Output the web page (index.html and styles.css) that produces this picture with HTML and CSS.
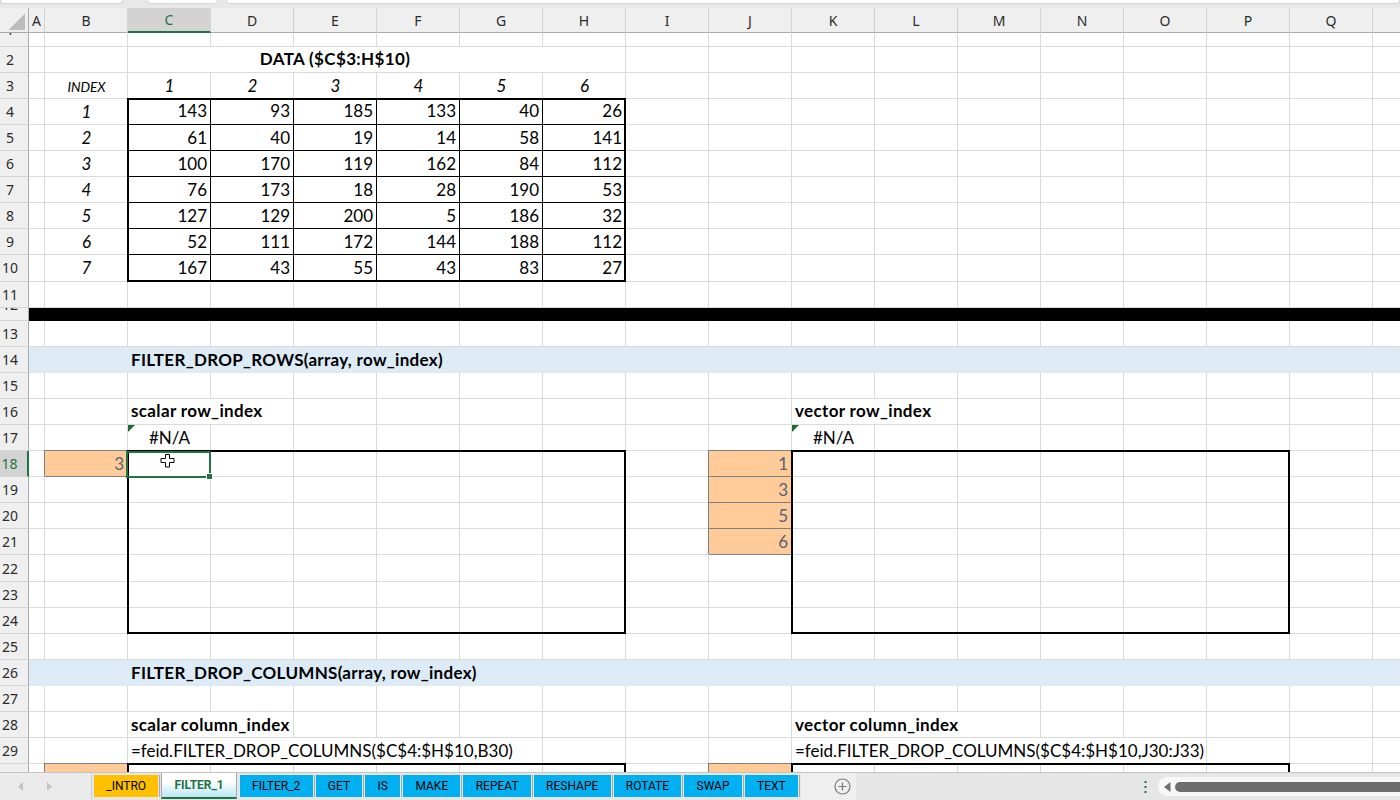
FILE: index.html
```html
<!DOCTYPE html>
<html>
<head>
<meta charset="utf-8">
<link rel="stylesheet" href="styles.css">
</head>
<body>
<div class="app">
  <div class="topstrip"><div class="fbox nb"></div><div class="fbox fx"></div><div class="fbox fb"></div></div>
  <div class="sheet">
    <div class="colhead">
      <div class="corner"><i></i></div>
      <div class="ch">A</div><div class="ch">B</div><div class="ch sel">C</div><div class="ch">D</div><div class="ch">E</div><div class="ch">F</div><div class="ch">G</div><div class="ch">H</div><div class="ch">I</div><div class="ch">J</div><div class="ch">K</div><div class="ch">L</div><div class="ch">M</div><div class="ch">N</div><div class="ch">O</div><div class="ch">P</div><div class="ch">Q</div><div class="ch">R</div>
    </div>

    <div class="row short1"><div class="rh clip"><span>1</span></div></div>
    <div class="row"><div class="rh">2</div><div class="c ctr b gC s6 spill title">DATA ($C$3:H$10)</div></div>
    <div class="row"><div class="rh">3</div><div class="c ctr it sm gB">INDEX</div><div class="c ctr it">1</div><div class="c ctr it">2</div><div class="c ctr it">3</div><div class="c ctr it">4</div><div class="c ctr it">5</div><div class="c ctr it">6</div></div>
    <div class="row"><div class="rh">4</div><div class="c ctr it gB">1</div><div class="c bx d et el">143</div><div class="c bx d et">93</div><div class="c bx d et">185</div><div class="c bx d et">133</div><div class="c bx d et">40</div><div class="c bx d et er">26</div></div>
    <div class="row"><div class="rh">5</div><div class="c ctr it gB">2</div><div class="c bx d el">61</div><div class="c bx d">40</div><div class="c bx d">19</div><div class="c bx d">14</div><div class="c bx d">58</div><div class="c bx d er">141</div></div>
    <div class="row"><div class="rh">6</div><div class="c ctr it gB">3</div><div class="c bx d el">100</div><div class="c bx d">170</div><div class="c bx d">119</div><div class="c bx d">162</div><div class="c bx d">84</div><div class="c bx d er">112</div></div>
    <div class="row"><div class="rh">7</div><div class="c ctr it gB">4</div><div class="c bx d el">76</div><div class="c bx d">173</div><div class="c bx d">18</div><div class="c bx d">28</div><div class="c bx d">190</div><div class="c bx d er">53</div></div>
    <div class="row"><div class="rh">8</div><div class="c ctr it gB">5</div><div class="c bx d el">127</div><div class="c bx d">129</div><div class="c bx d">200</div><div class="c bx d">5</div><div class="c bx d">186</div><div class="c bx d er">32</div></div>
    <div class="row"><div class="rh">9</div><div class="c ctr it gB">6</div><div class="c bx d el">52</div><div class="c bx d">111</div><div class="c bx d">172</div><div class="c bx d">144</div><div class="c bx d">188</div><div class="c bx d er">112</div></div>
    <div class="row"><div class="rh">10</div><div class="c ctr it gB">7</div><div class="c bx d el eb">167</div><div class="c bx d eb">43</div><div class="c bx d eb">55</div><div class="c bx d eb">43</div><div class="c bx d eb">83</div><div class="c bx d er eb">27</div></div>
    <div class="row"><div class="rh">11</div></div>
    <div class="row short12"><div class="rh clip"><span>12</span></div><div class="blk"></div></div>
    <div class="row"><div class="rh">13</div></div>
    <div class="row"><div class="rh">14</div><div class="band">FILTER_DROP_ROWS(array, row_index)</div></div>
    <div class="row"><div class="rh">15</div></div>
    <div class="row"><div class="rh">16</div><div class="c b gC s2 spill">scalar row_index</div><div class="c b gK s2 spill">vector row_index</div></div>
    <div class="row"><div class="rh">17</div><div class="c ctr err gC">#N/A</div><div class="c ctr err gK">#N/A</div></div>
    <div class="row"><div class="rh sel">18</div><div class="c inp gB">3</div><div class="c bx et el cur gC"><svg class="cursor" width="15" height="14" viewBox="0 0 15 14"><polygon points="5.5,0.5 9.5,0.5 9.5,4.5 14,4.5 14,8.5 9.5,8.5 9.5,13 5.5,13 5.5,8.5 1,8.5 1,4.5 5.5,4.5" fill="#fff" stroke="#000" stroke-width="1"/></svg><div class="selbox"></div></div><div class="c bx et"></div><div class="c bx et"></div><div class="c bx et"></div><div class="c bx et"></div><div class="c bx et er"></div><div class="c inp gJ">1</div><div class="c bx et el"></div><div class="c bx et"></div><div class="c bx et"></div><div class="c bx et"></div><div class="c bx et"></div><div class="c bx et er"></div></div>
    <div class="row"><div class="rh">19</div><div class="c bx el gC"></div><div class="c bx er gH"></div><div class="c inp gJ">3</div><div class="c bx el gK"></div><div class="c bx er gP"></div></div>
    <div class="row"><div class="rh">20</div><div class="c bx el gC"></div><div class="c bx er gH"></div><div class="c inp gJ">5</div><div class="c bx el gK"></div><div class="c bx er gP"></div></div>
    <div class="row"><div class="rh">21</div><div class="c bx el gC"></div><div class="c bx er gH"></div><div class="c inp gJ">6</div><div class="c bx el gK"></div><div class="c bx er gP"></div></div>
    <div class="row"><div class="rh">22</div><div class="c bx el gC"></div><div class="c bx er gH"></div><div class="c bx el gK"></div><div class="c bx er gP"></div></div>
    <div class="row"><div class="rh">23</div><div class="c bx el gC"></div><div class="c bx er gH"></div><div class="c bx el gK"></div><div class="c bx er gP"></div></div>
    <div class="row"><div class="rh">24</div><div class="c bx el eb gC"></div><div class="c bx eb"></div><div class="c bx eb"></div><div class="c bx eb"></div><div class="c bx eb"></div><div class="c bx er eb"></div><div class="c bx el eb gK"></div><div class="c bx eb"></div><div class="c bx eb"></div><div class="c bx eb"></div><div class="c bx eb"></div><div class="c bx er eb"></div></div>
    <div class="row"><div class="rh">25</div></div>
    <div class="row"><div class="rh">26</div><div class="band">FILTER_DROP_COLUMNS(array, row_index)</div></div>
    <div class="row"><div class="rh">27</div></div>
    <div class="row"><div class="rh">28</div><div class="c b gC s2 spill">scalar column_index</div><div class="c b gK s3 spill">vector column_index</div></div>
    <div class="row"><div class="rh">29</div><div class="c gC s5 spill">=feid.FILTER_DROP_COLUMNS($C$4:$H$10,B30)</div><div class="c gK s5 spill">=feid.FILTER_DROP_COLUMNS($C$4:$H$10,J30:J33)</div></div>
    <div class="row"><div class="rh">30</div><div class="c inp gB"></div><div class="c bx et el"></div><div class="c bx et"></div><div class="c bx et"></div><div class="c bx et"></div><div class="c bx et"></div><div class="c bx et er"></div><div class="c inp gJ"></div><div class="c bx et el"></div><div class="c bx et"></div><div class="c bx et"></div><div class="c bx et"></div><div class="c bx et"></div><div class="c bx et er"></div></div>
  </div>

  <div class="tabbar">
    <div class="nav">
      <svg width="6" height="9" viewBox="0 0 6 9"><polygon points="5,0 0,4.5 5,9" fill="#c4c4c4"/></svg>
      <svg width="6" height="9" viewBox="0 0 6 9"><polygon points="0,0 5,4.5 0,9" fill="#c4c4c4"/></svg>
    </div>
    <div class="tabs">
      <div class="tab gold">_INTRO</div>
      <div class="tab active">FILTER_1</div>
      <div class="tab blue">FILTER_2</div>
      <div class="tab blue">GET</div>
      <div class="tab blue">IS</div>
      <div class="tab blue">MAKE</div>
      <div class="tab blue">REPEAT</div>
      <div class="tab blue">RESHAPE</div>
      <div class="tab blue">ROTATE</div>
      <div class="tab blue">SWAP</div>
      <div class="tab blue">TEXT</div>
    </div>
    <div class="addarea">
      <svg width="17" height="17" viewBox="0 0 17 17"><circle cx="8.5" cy="8.5" r="7.5" fill="none" stroke="#7a7a7a" stroke-width="1.2"/><path d="M8.5 4.5v8M4.5 8.5h8" stroke="#7a7a7a" stroke-width="1.2"/></svg>
    </div>
    <div class="spacer"></div>
    <div class="dots"><svg width="3" height="12" viewBox="0 0 3 12"><rect x="0.5" y="0" width="2" height="2" fill="#217346"/><rect x="0.5" y="5" width="2" height="2" fill="#217346"/><rect x="0.5" y="10" width="2" height="2" fill="#217346"/></svg></div>
    <div class="hscroll">
      <svg width="7" height="10" viewBox="0 0 7 10"><polygon points="6.5,0 0,5 6.5,10" fill="#6e6e6e"/></svg>
      <div class="thumb"></div>
    </div>
  </div>
</div>
</body>
</html>
```
FILE: styles.css
```css
html, body {
  margin: 0;
  padding: 0;
}
body {
  width: 1400px;
  height: 800px;
  overflow: hidden;
  background: #fff;
  font-family: "Lato", "Liberation Sans", sans-serif;
}
.app {
  display: flex;
  flex-direction: column;
  width: 1400px;
  height: 800px;
}

/* formula-bar remnant */
.topstrip {
  flex: none;
  height: 8px;
  background: #e8e8e8;
  display: flex;
  align-items: flex-start;
}
.fbox {
  height: 3px;
  background: #fff;
  border: 1px solid #d6d6d6;
  border-top: none;
  border-radius: 0 0 4px 4px;
}
.nb { width: 121px; }
.fx { width: 69px; margin-left: 24px; }
.fb { flex: 1; margin-left: 8px; }

/* sheet */
.sheet {
  flex: 1;
  min-height: 0;
  overflow: hidden;
  background: #fff;
}
.colhead {
  display: grid;
  grid-template-columns: 29px 16px repeat(17, 83px);
  height: 25px;
}
.corner {
  background: #efefef;
  border-right: 1px solid #ababab;
  border-bottom: 1px solid #ababab;
  display: flex;
  align-items: flex-end;
  justify-content: flex-end;
  padding: 0 3px 2px 0;
}
.corner i {
  display: block;
  width: 17px;
  height: 16px;
  background: linear-gradient(to bottom right, transparent 50%, #bdbdbd 50%);
}
.ch {
  background: #efefef;
  border-right: 1px solid #d3d3d3;
  border-bottom: 1px solid #ababab;
  display: flex;
  align-items: center;
  justify-content: center;
  font-family: "Noto Sans", "Open Sans", sans-serif;
  font-size: 14px;
  color: #2b2b2b;
}
.ch.sel {
  background: #d3d3d3;
  color: #217346;
  border-bottom: 2px solid #217346;
}

.row {
  display: grid;
  grid-template-columns: 29px 16px repeat(17, 83px);
  height: 26.1px;
  background:
    linear-gradient(#dadada, #dadada) 0 100% / 100% 1px no-repeat,
    linear-gradient(to right, transparent 82px, #dadada 82px) 45px 0 / 83px 100% repeat-x;
}
.row.short1 { height: 13.7px; }
.row.short12 { height: 13px; }

.rh {
  grid-column: 1;
  background: #efefef;
  border-right: 1px solid #ababab;
  border-bottom: 1px solid #d6d6d6;
  display: flex;
  align-items: center;
  justify-content: center;
  padding-right: 8px;
  font-family: "Noto Sans", "Open Sans", sans-serif;
  font-size: 14px;
  color: #2b2b2b;
  overflow: hidden;
}
.rh.clip { align-items: flex-start; }
.rh.clip span { margin-top: -12px; line-height: 18px; }
.rh.sel {
  background: #d3d3d3;
  color: #217346;
  border-right: 2px solid #217346;
}

/* column placement */
.gB { grid-column: 3; }
.gC { grid-column: 4; }
.gH { grid-column: 9; }
.gJ { grid-column: 11; }
.gK { grid-column: 12; }
.gP { grid-column: 17; }
.s2 { grid-column-end: span 2; }
.s3 { grid-column-end: span 3; }
.s5 { grid-column-end: span 5; }
.s6 { grid-column-end: span 6; }

/* cells */
.c {
  display: flex;
  align-items: center;
  padding: 0 3px;
  min-width: 0;
  white-space: nowrap;
  font-size: 17px;
  line-height: 20px;
  color: #000;
}
.ctr { justify-content: center; }
.b { font-weight: 700; letter-spacing: 0.35px; }
.it { font-style: italic; }
.sm { font-size: 13.5px; padding-top: 3px; }
.spill {
  background: #fff;
  border-right: 1px solid #dadada;
  border-bottom: 1px solid #dadada;
}
.title { padding-right: 86px; }

/* borders: thin inner, medium outer */
.bx {
  --st: 0 0 #0000, 0 0 #0000;
  --sl: 0 0 #0000, 0 0 #0000;
  --sc: 0 0 #0000;
  --sr: 0 0 #0000;
  --sb: 0 0 #0000;
  box-shadow: var(--st), var(--sl), var(--sc), var(--sr), var(--sb);
}
.d {
  justify-content: flex-end;
  border-right: 1px solid #000;
  border-bottom: 1px solid #000;
}
.et { --st: 0 -1px 0 #000, inset 0 1px 0 #000; }
.el { --sl: -1px 0 0 #000, inset 1px 0 0 #000; }
.et.el { --sc: -1px -1px 0 #000; }
.er { --sr: inset -1px 0 0 #000; border-right: 1px solid #000; }
.eb { --sb: inset 0 -1px 0 #000; border-bottom: 1px solid #000; }

/* input cells */
.inp {
  justify-content: flex-end;
  background: #ffcc99;
  border-right: 1px solid #7f7f7f;
  border-bottom: 1px solid #7f7f7f;
  box-shadow: -1px -1px 0 #7f7f7f;
  color: #56627a;
}

/* error indicator */
.err { position: relative; }
.err::before {
  content: "";
  position: absolute;
  left: 0;
  top: 0;
  border-top: 7px solid #1d6a31;
  border-right: 7px solid transparent;
}

/* selection */
.cur { position: relative; }
.cursor {
  position: absolute;
  left: 32px;
  top: 3px;
}
.selbox {
  position: absolute;
  left: -2px;
  right: 0;
  top: 0;
  bottom: -1px;
  border: 2px solid #217346;
}
.selbox::after {
  content: "";
  position: absolute;
  right: -4px;
  bottom: -4px;
  width: 5px;
  height: 5px;
  background: #217346;
  border: 1px solid #fff;
}

.band {
  grid-column: 2 / -1;
  background: #ddebf7;
  display: flex;
  align-items: center;
  padding-left: 102px;
  font-size: 17px;
  font-weight: 700;
  letter-spacing: 0.3px;
  white-space: nowrap;
}
.blk {
  grid-column: 2 / -1;
  background: #000;
}

/* sheet tabs */
.tabbar {
  flex: none;
  height: 27px;
  border-top: 1px solid #c3c3c3;
  background: #e6e6e6;
  display: flex;
  align-items: stretch;
}
.nav {
  width: 92px;
  background: #ebebeb;
  border-right: 1px solid #d0d0d0;
  display: flex;
  align-items: center;
  gap: 23px;
  padding-left: 18px;
  box-sizing: border-box;
}
.tabs {
  display: flex;
  align-items: flex-start;
  padding-left: 2px;
}
.tab {
  position: relative;
  margin-top: 2px;
  margin-right: 3px;
  height: 22px;
  padding: 0 12.25px;
  display: flex;
  align-items: center;
  font-family: "Roboto", "Liberation Sans", sans-serif;
  font-size: 12px;
  color: #000;
}
.tab::after {
  content: "";
  position: absolute;
  right: -2px;
  top: 0;
  bottom: 0;
  width: 1px;
  background: #a8a8a8;
}
.tab.gold { background: #ffc000; }
.tab.blue { background: #00b0f0; }
.tab.active {
  margin-top: 0;
  height: 24px;
  padding: 0 12px;
  background: linear-gradient(#ffffff 35%, #b9e6f7);
  border-left: 1px solid #a8a8a8;
  border-right: 1px solid #a8a8a8;
  border-bottom: 2px solid #217346;
  box-sizing: content-box;
  color: #217346;
  font-weight: 700;
}
.tab.active::after { display: none; }
.addarea {
  width: 55px;
  background: #efefef;
  display: flex;
  align-items: center;
  padding-left: 33px;
  box-sizing: border-box;
}
.spacer { flex: 1; }
.dots {
  display: flex;
  align-items: center;
  width: 14px;
}
.hscroll {
  width: 242px;
  margin: 4px 0;
  background: #f7f7f7;
  border-radius: 9px 0 0 9px;
  display: flex;
  align-items: center;
  padding-left: 6px;
  gap: 4px;
  box-sizing: border-box;
}
.thumb {
  flex: 1;
  height: 10px;
  background: #6d6d6d;
  border-radius: 5px 0 0 5px;
}
```
